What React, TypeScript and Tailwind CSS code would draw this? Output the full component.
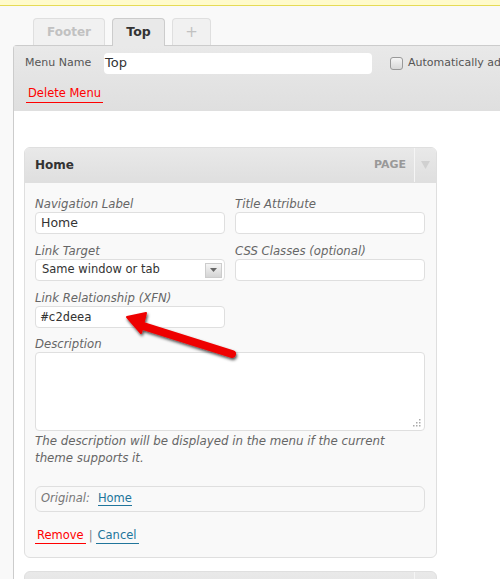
const font = { fontFamily: '"DejaVu Sans", Verdana, sans-serif' };

function Field({ label, children }: { label: string; children: React.ReactNode }) {
  return (
    <div className="flex flex-col">
      <span className="text-[11.7px] italic text-[#666] leading-[14px] mb-[1px]">{label}</span>
      {children}
    </div>
  );
}

function TextBox({ value = "", mono = false }: { value?: string; mono?: boolean }) {
  return (
    <div
      className={`h-[22px] w-[190px] bg-white border border-[#dfdfdf] rounded-[4px] px-[5px] flex items-center text-[12.5px] text-[#333] ${
        mono ? "font-['DejaVu_Sans_Mono'] text-[12px]" : ""
      }`}
    >
      {value}
    </div>
  );
}

export default function App() {
  return (
    <div className="relative w-[500px] h-[579px] overflow-hidden bg-[#f9f9f9]" style={font}>
      <div className="h-[6px] bg-[#fffbcc] border-b border-[#e6db55]" />

      <div className="flex items-end gap-[7px] pl-[33px] pt-[12px] h-[39px]">
        <div className="w-[72px] h-[27px] border border-b-0 border-[#dfdfdf] rounded-t-[4px] bg-[#f1f1f1] flex items-center justify-center text-[12px] font-bold text-[#c1c1c1]">
          Footer
        </div>
        <div className="w-[53px] h-[28px] border border-b-0 border-[#ccc] rounded-t-[4px] bg-[#e9e9e9] flex items-center justify-center text-[12.5px] font-bold text-[#333] relative top-[1px]">
          Top
        </div>
        <div className="w-[39px] h-[27px] border border-b-0 border-[#dfdfdf] rounded-t-[4px] bg-[#f1f1f1] flex items-center justify-center text-[15px] text-[#c1c1c1]">
          +
        </div>
      </div>

      <div className="ml-[13px] border-l border-t border-[#ccc] rounded-tl-[4px] h-[600px] bg-white">
        <div className="h-[65px] bg-gradient-to-b from-[#e9e9e9] to-[#dfdfdf] pl-[11px] pt-[6px] overflow-hidden">
          <div className="flex items-center h-[22px] whitespace-nowrap">
            <span className="text-[11px] text-[#555] w-[79px] shrink-0">Menu Name</span>
            <div className="h-[21px] w-[268px] shrink-0 bg-white rounded-[4px] flex items-center px-[1px] text-[13px] text-[#333]">
              Top
            </div>
            <div className="ml-[18px] shrink-0 w-[13px] h-[13px] border border-[#999] rounded-[3px] bg-gradient-to-b from-[#f5f5f5] to-[#d8d8d8]" />
            <span className="ml-[5px] shrink-0 text-[11px] text-[#555]">Automatically ad</span>
          </div>
          <div className="mt-[12px] ml-[1px] inline-block text-[11.5px] text-[#f00] border-b border-[#f00] leading-[15px] pb-[1px] px-[2px]">
            Delete Menu
          </div>
        </div>

        <div className="pt-[36px] pl-[10px]">
          <div className="w-[413px] border border-[#dfdfdf] rounded-[6px] bg-[#f9f9f9] overflow-hidden">
            <div className="h-[35px] bg-gradient-to-b from-[#e9e9e9] to-[#dfdfdf] flex items-center border-b border-[#dfdfdf]">
              <span className="ml-[10px] text-[12px] font-bold text-[#333] flex-1">Home</span>
              <span className="text-[11px] font-bold text-[#999] mr-[8px]">PAGE</span>
              <div className="h-full w-[22px] border-l border-[#f5f5f5] flex items-center justify-center">
                <svg width="9" height="8" viewBox="0 0 9 8">
                  <path d="M0 0 L9 0 L4.5 8 Z" fill="#d0d0d0" />
                </svg>
              </div>
            </div>

            <div className="px-[10px] pt-[14px] pb-[13px]">
              <div className="grid grid-cols-[190px_190px] gap-x-[10px] gap-y-[10px]">
                <Field label="Navigation Label">
                  <TextBox value="Home" />
                </Field>
                <Field label="Title Attribute">
                  <TextBox />
                </Field>
                <Field label="Link Target">
                  <div className="h-[22px] w-[190px] bg-white border border-[#dfdfdf] rounded-[4px] pl-[6px] pr-[2px] flex items-center text-[11.5px] text-[#333]">
                    <span className="flex-1">Same window or tab</span>
                    <div className="w-[17px] h-[15px] bg-gradient-to-b from-[#f5f5f5] to-[#d4d4d4] border border-[#ccc] flex items-center justify-center">
                      <svg width="7" height="4" viewBox="0 0 7 4">
                        <path d="M0 0 L7 0 L3.5 4 Z" fill="#666" />
                      </svg>
                    </div>
                  </div>
                </Field>
                <Field label="CSS Classes (optional)">
                  <TextBox />
                </Field>
                <Field label="Link Relationship (XFN)">
                  <TextBox value="#c2deea" mono />
                </Field>
              </div>

              <div className="mt-[9px]">
                <Field label="Description">
                  <div className="relative h-[79px] w-[390px] bg-white border border-[#dfdfdf] rounded-[4px]">
                    <svg className="absolute right-[3px] bottom-[3px]" width="9" height="9" viewBox="0 0 9 9">
                      <rect x="7" y="1" width="1.5" height="1.5" fill="#aaa" />
                      <rect x="4" y="4" width="1.5" height="1.5" fill="#aaa" />
                      <rect x="7" y="4" width="1.5" height="1.5" fill="#aaa" />
                      <rect x="1" y="7" width="1.5" height="1.5" fill="#aaa" />
                      <rect x="4" y="7" width="1.5" height="1.5" fill="#aaa" />
                      <rect x="7" y="7" width="1.5" height="1.5" fill="#aaa" />
                    </svg>
                  </div>
                </Field>
                <p className="mt-[2px] text-[11.8px] italic text-[#666] leading-[17px] w-[390px]">
                  The description will be displayed in the menu if the current theme supports it.
                </p>
              </div>

              <div className="mt-[19px] w-[390px] h-[26px] border border-[#dfdfdf] rounded-[6px] flex items-center pl-[5px] text-[11.5px]">
                <span className="italic text-[#777]">Original:</span>
                <span className="ml-[8px] text-[#21759b] border-b border-[#21759b] leading-[13px]">Home</span>
              </div>

              <div className="mt-[15px] flex items-center text-[11.5px] leading-[16px]">
                <span className="text-[#f00] border-b border-[#f00] px-[2px]">Remove</span>
                <span className="mx-[3px] text-[#888]">|</span>
                <span className="text-[#21759b] border-b border-[#21759b] px-[2px]">Cancel</span>
              </div>
            </div>
          </div>

          <div className="mt-[13px] w-[413px] h-[40px] border border-[#dfdfdf] rounded-t-[6px] bg-gradient-to-b from-[#e9e9e9] to-[#dfdfdf] flex justify-end">
            <div className="w-[22px] h-full border-l border-[#f5f5f5]" />
          </div>
        </div>
      </div>

      <svg className="absolute left-0 top-0 pointer-events-none" width="500" height="579" viewBox="0 0 500 579">
        <defs>
          <filter id="sh" x="-20%" y="-50%" width="140%" height="200%">
            <feDropShadow dx="1" dy="2" stdDeviation="1.5" floodColor="#000" floodOpacity="0.7" />
          </filter>
        </defs>
        <g filter="url(#sh)">
          <line x1="232" y1="354" x2="140" y2="325" stroke="#ee0000" strokeWidth="8" strokeLinecap="round" />
          <path d="M127 317 L146 313 L141 333 Z" fill="#ee0000" stroke="#ee0000" strokeWidth="2" strokeLinejoin="round" />
        </g>
      </svg>
    </div>
  );
}
